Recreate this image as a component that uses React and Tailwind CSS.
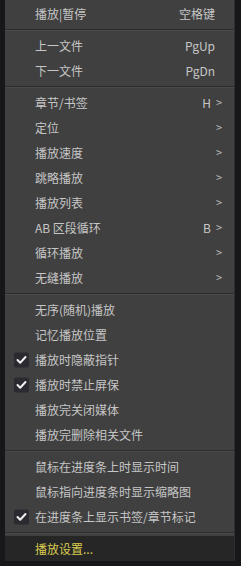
function Check() {
  return (
    <span className="absolute left-[9px] top-1/2 -translate-y-1/2 w-[15px] h-[15px] rounded-[2px] bg-[#2a2a30] flex items-center justify-center">
      <svg width="11" height="9" viewBox="0 0 11 9">
        <path d="M1.5 4.5 L4.2 7.2 L9.5 1.5" fill="none" stroke="#f0f0f0" strokeWidth="2" strokeLinecap="round" strokeLinejoin="round" />
      </svg>
    </span>
  )
}

function Item({ label, right, arrow, checked, active }) {
  return (
    <div className={"relative h-[25px] flex items-center pl-[30px] pr-[12px] " + (active ? "bg-[#262626] text-[#d9cb4f]" : "text-[#c6c6c6]")}>
      {checked && <Check />}
      <span className="flex-1">{label}</span>
      {right && <span className={arrow ? "mr-[5px]" : "mr-[7px]"}>{right}</span>}
      {arrow && <span className="text-[11px] text-[#bdbdbd]">&gt;</span>}
    </div>
  )
}

function Sep() {
  return (
    <div className="h-[7px] flex flex-col justify-center">
      <div className="h-px bg-[#2b2b2b]" />
      <div className="h-px bg-[#4a4a4a]" />
    </div>
  )
}

export default function App() {
  return (
    <div className="w-[241px] h-[566px] bg-[#17171a] overflow-hidden flex" style={{ fontFamily: '"Noto Sans CJK SC", "Liberation Sans", sans-serif' }}>
      <div className="ml-[5px] w-[230px] h-[561px] bg-[#404040] border-r border-[#2e2e2e] pt-px text-[12px]">
        <Item label="播放|暂停" right="空格键" />
        <Sep />
        <Item label="上一文件" right="PgUp" />
        <Item label="下一文件" right="PgDn" />
        <Sep />
        <Item label="章节/书签" right="H" arrow />
        <Item label="定位" arrow />
        <Item label="播放速度" arrow />
        <Item label="跳略播放" arrow />
        <Item label="播放列表" arrow />
        <Item label="AB 区段循环" right="B" arrow />
        <Item label="循环播放" arrow />
        <Item label="无缝播放" arrow />
        <Sep />
        <Item label="无序(随机)播放" />
        <Item label="记忆播放位置" />
        <Item label="播放时隐蔽指针" checked />
        <Item label="播放时禁止屏保" checked />
        <Item label="播放完关闭媒体" />
        <Item label="播放完删除相关文件" />
        <Sep />
        <Item label="鼠标在进度条上时显示时间" />
        <Item label="鼠标指向进度条时显示缩略图" />
        <Item label="在进度条上显示书签/章节标记" checked />
        <Sep />
        <Item label="播放设置..." active />
      </div>
    </div>
  )
}
